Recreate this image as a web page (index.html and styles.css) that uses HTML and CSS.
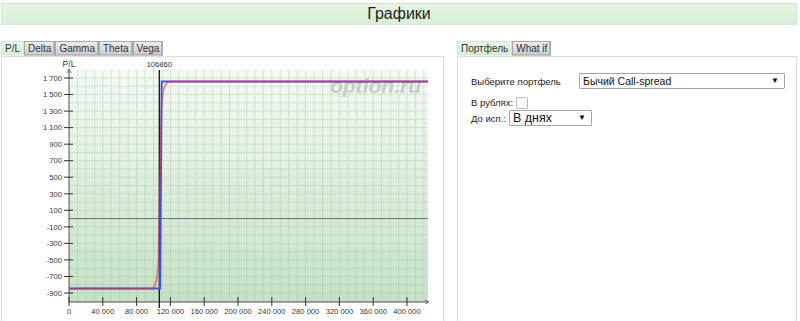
FILE: index.html
```html
<!DOCTYPE html>
<html lang="ru">
  <head>
    <meta charset="UTF-8" />
    <title>Графики</title>
    <link rel="stylesheet" href="styles.css">
  </head>
  <body>
    <div class="header">Графики</div>

    <div class="columns">
      <!-- график -->
      <div class="panel panel-left">
        <div class="tabs">
          <span class="tab active">P/L</span>
          <span class="tab">Delta</span>
          <span class="tab">Gamma</span>
          <span class="tab">Theta</span>
          <span class="tab">Vega</span>
        </div>
        <div class="box chart-box">
          <svg class="chart" width="441" height="264" viewBox="0 0 441 264">
            <defs>
              <linearGradient id="plotBg" x1="0" y1="0" x2="0" y2="1">
                <stop offset="0" stop-color="#f4faf4" />
                <stop offset="1" stop-color="#c5e2c6" />
              </linearGradient>
              <pattern id="grid" patternUnits="userSpaceOnUse" x="68.5" y="300.8" width="8.45" height="8.27">
                <path d="M0.5 0 V8.27 M0 0.5 H8.45" stroke="#98b098" stroke-opacity="0.33" stroke-width="1" fill="none" />
              </pattern>
            </defs>
            <g transform="translate(-2 -57)">
              <rect x="69" y="70" width="359" height="232" fill="url(#plotBg)" />
              <rect x="69" y="70" width="359" height="232" fill="url(#grid)" />
              <text class="watermark" x="330" y="93">option.ru</text>

              <line x1="69" y1="218.6" x2="428" y2="218.6" stroke="#66776a" stroke-width="1" />

              <!-- оси -->
              <line x1="69" y1="70" x2="69" y2="302" stroke="#555" stroke-width="1" />
              <path d="M67 73 L69 69 L71 73" fill="none" stroke="#555" stroke-width="0.8" />
              <line x1="69" y1="302" x2="428" y2="302" stroke="#555" stroke-width="1" />
              <path d="M425 300 L429 302 L425 304" fill="none" stroke="#555" stroke-width="0.8" />

              <g class="ticks" stroke="#333" stroke-width="1">
                <line x1="64" y1="78" x2="73" y2="78" />
                <line x1="64" y1="94.5" x2="73" y2="94.5" />
                <line x1="64" y1="111.1" x2="73" y2="111.1" />
                <line x1="64" y1="127.6" x2="73" y2="127.6" />
                <line x1="64" y1="144.2" x2="73" y2="144.2" />
                <line x1="64" y1="160.7" x2="73" y2="160.7" />
                <line x1="64" y1="177.2" x2="73" y2="177.2" />
                <line x1="64" y1="193.8" x2="73" y2="193.8" />
                <line x1="64" y1="210.3" x2="73" y2="210.3" />
                <line x1="64" y1="226.9" x2="73" y2="226.9" />
                <line x1="64" y1="243.4" x2="73" y2="243.4" />
                <line x1="64" y1="259.9" x2="73" y2="259.9" />
                <line x1="64" y1="276.5" x2="73" y2="276.5" />
                <line x1="64" y1="293" x2="73" y2="293" />

                <line x1="69" y1="297" x2="69" y2="306" />
                <line x1="102.8" y1="297" x2="102.8" y2="306" />
                <line x1="136.6" y1="297" x2="136.6" y2="306" />
                <line x1="170.4" y1="297" x2="170.4" y2="306" />
                <line x1="204.2" y1="297" x2="204.2" y2="306" />
                <line x1="238" y1="297" x2="238" y2="306" />
                <line x1="271.8" y1="297" x2="271.8" y2="306" />
                <line x1="305.6" y1="297" x2="305.6" y2="306" />
                <line x1="339.4" y1="297" x2="339.4" y2="306" />
                <line x1="373.2" y1="297" x2="373.2" y2="306" />
                <line x1="407" y1="297" x2="407" y2="306" />
              </g>

              <text x="69" y="67" class="axis-title">P/L</text>

              <g class="y-labels">
                <text x="62" y="80.7">1 700</text>
                <text x="62" y="97.2">1 500</text>
                <text x="62" y="113.8">1 300</text>
                <text x="62" y="130.3">1 100</text>
                <text x="62" y="146.9">900</text>
                <text x="62" y="163.4">700</text>
                <text x="62" y="179.9">500</text>
                <text x="62" y="196.5">300</text>
                <text x="62" y="213">100</text>
                <text x="62" y="229.6">-100</text>
                <text x="62" y="246.1">-300</text>
                <text x="62" y="262.6">-500</text>
                <text x="62" y="279.2">-700</text>
                <text x="62" y="295.7">-900</text>
              </g>

              <g class="x-labels">
                <text x="69" y="314">0</text>
                <text x="102.8" y="314">40 000</text>
                <text x="136.6" y="314">80 000</text>
                <text x="170.4" y="314">120 000</text>
                <text x="204.2" y="314">160 000</text>
                <text x="238" y="314">200 000</text>
                <text x="271.8" y="314">240 000</text>
                <text x="305.6" y="314">280 000</text>
                <text x="339.4" y="314">320 000</text>
                <text x="373.2" y="314">360 000</text>
                <text x="407" y="314">400 000</text>
                <text x="159.3" y="67">106860</text>
              </g>

              <!-- текущая цена -->
              <line x1="159.3" y1="70" x2="159.3" y2="308" stroke="#111" stroke-width="1.3" />

              <!-- профиль на экспирацию -->
              <path d="M69 288.6 H160 L161.7 81.6 H428" fill="none" stroke="#3452ff" stroke-width="2" />
              <!-- текущий профиль -->
              <path d="M69 288.6 H151.5 C155 288.4 157 283 158.3 262 L161.3 112 C162.4 90 164.5 82.4 169.5 81.6 H428"
                    fill="none" stroke="#ff2a2a" stroke-opacity="0.6" stroke-width="1.6" />
            </g>
          </svg>
        </div>
      </div>

      <!-- параметры -->
      <div class="panel panel-right">
        <div class="tabs">
          <span class="tab active">Портфель</span>
          <span class="tab">What if</span>
        </div>
        <div class="box form-box">
          <div class="row">
            <span class="label label-wide">Выберите портфель</span>
            <div class="select select-wide">Бычий Call-spread<span class="arrow">▼</span></div>
          </div>
          <div class="row row-check">
            <span class="label">В рублях:</span>
            <span class="checkbox"></span>
          </div>
          <div class="row">
            <span class="label">До исп.:</span>
            <div class="select select-days">В днях<span class="arrow">▼</span></div>
          </div>
        </div>
      </div>
    </div>
  </body>
</html>
```

FILE: styles.css
```css
/* общие */
body {
  margin: 0;
  padding: 0;
  background-color: #fff;
  font-family: "Liberation Sans", Arial, sans-serif;
  color: #222;
  overflow: hidden;
}

/* заголовок */
.header {
  margin: 3px 3px 0 1px;
  height: 20px;
  line-height: 20px;
  border: 1px solid #d6e2d6;
  background: linear-gradient(to bottom, #e6f5e4, #d8eed6);
  text-align: center;
  font-size: 16px;
  color: #1e1e1e;
}

/* колонки */
.columns {
  display: flex;
  margin-top: 16px;
}

.panel-left {
  width: 443px;
  margin-left: 1px;
}

.panel-right {
  width: 340px;
  margin-left: 13px;
}

/* вкладки */
.tabs {
  display: flex;
  height: 15px;
}

.tab {
  display: block;
  height: 13px;
  line-height: 13px;
  padding: 0 3px;
  font-size: 10px;
  color: #333;
  border: 1px solid #a9a9a9;
  border-bottom-color: #c8c8c8;
  background: linear-gradient(to bottom, #ececec, #cbcbcb);
  box-shadow: inset -1px -1px 0 #b5b5b5;
}

.tab.active {
  border-color: #d4e4d4;
  border-bottom: 1px solid #eaf6ea;
  background: linear-gradient(to bottom, #e9f6e9, #d3ecd3);
  box-shadow: none;
}

/* рамка панели */
.box {
  border: 1px solid #dcdcdc;
  height: 280px;
  background-color: #fff;
}

.chart {
  display: block;
}

.chart text {
  font-family: "Liberation Sans", Arial, sans-serif;
  font-size: 7.6px;
  fill: #333;
}

.y-labels text {
  text-anchor: end;
}

.chart .axis-title {
  font-size: 8.5px;
  text-anchor: middle;
}

.x-labels text {
  text-anchor: middle;
}

.chart .watermark {
  font-size: 21px;
  font-weight: bold;
  font-style: italic;
  fill: #c6cec6;
}

/* форма */
.form-box {
  padding: 16px 0 0 13px;
  box-sizing: border-box;
  font-size: 9.5px;
}

.row {
  display: flex;
  align-items: center;
}

.row-check {
  margin-top: 8px;
  height: 11px;
}

.row-check + .row {
  margin-top: 2px;
}

.label {
  color: #222;
  margin-right: 3px;
}

.label-wide {
  width: 108px;
  margin-right: 0;
}

.select {
  position: relative;
  height: 14px;
  line-height: 14px;
  border: 1px solid #a5a5a5;
  border-radius: 1px;
  background-color: #fff;
  padding-left: 3px;
  box-sizing: content-box;
  color: #111;
}

.select-wide {
  width: 201px;
  font-size: 10.5px;
}

.select-days {
  width: 78px;
  font-size: 12.5px;
}

.arrow {
  position: absolute;
  right: 5px;
  top: 0;
  font-size: 8px;
  color: #000;
}

.checkbox {
  display: inline-block;
  width: 10px;
  height: 10px;
  border: 1px solid #b8b8b8;
  border-radius: 2px;
  background-color: #fff;
}
```
